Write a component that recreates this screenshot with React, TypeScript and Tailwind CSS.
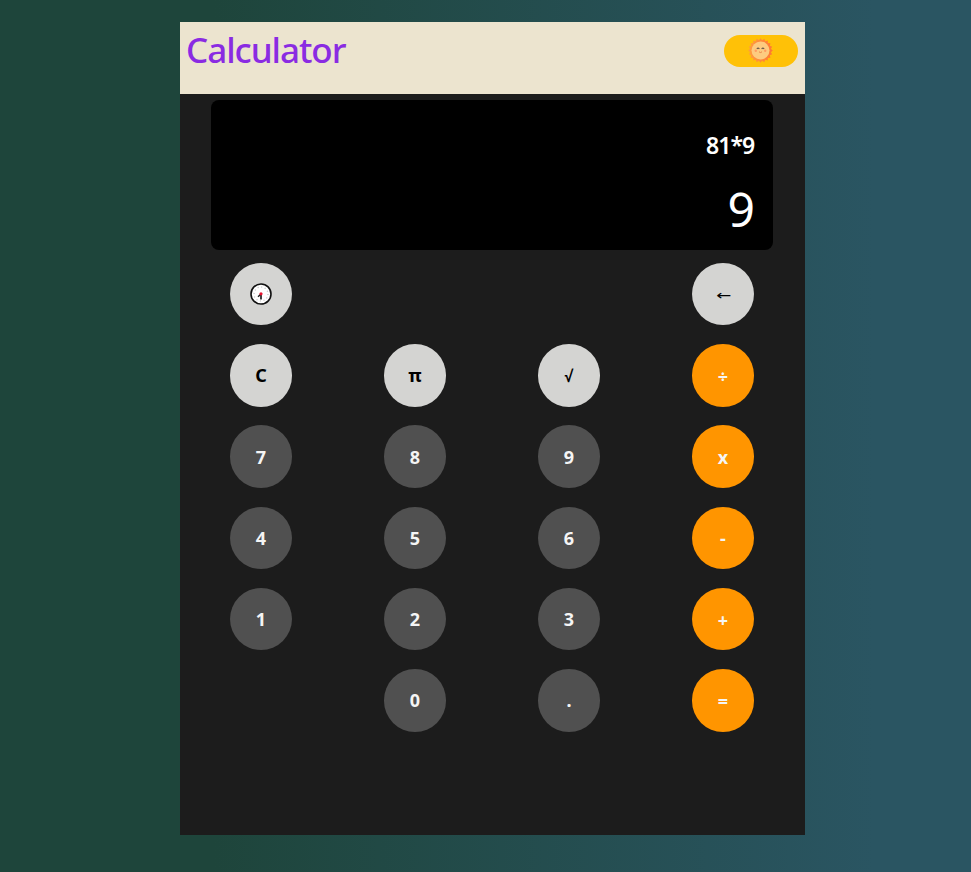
type Key = { label: string; kind: 'light' | 'dark' | 'orange' } | null;

const L = (label: string): Key => ({ label, kind: 'light' });
const D = (label: string): Key => ({ label, kind: 'dark' });
const O = (label: string): Key => ({ label, kind: 'orange' });

const keys: Key[] = [
  L('clock'), null, null, L('←'),
  L('C'), L('π'), L('√'), O('÷'),
  D('7'), D('8'), D('9'), O('x'),
  D('4'), D('5'), D('6'), O('-'),
  D('1'), D('2'), D('3'), O('+'),
  null, D('0'), D('.'), O('='),
];

const tones = {
  light: 'bg-[#d4d4d2] text-black',
  dark: 'bg-[#505050] text-[#f5f5f5]',
  orange: 'bg-[#ff9500] text-[#f5f5f5]',
};

function Clock() {
  return (
    <svg className="mb-[2px]" width="22" height="22" viewBox="0 0 22 22" aria-hidden="true">
      <circle cx="11" cy="11" r="10" fill="#fff" stroke="#111" strokeWidth="1.6" />
      <circle cx="11" cy="11" r="7" fill="none" stroke="#bbb" strokeWidth="1.2" strokeDasharray="1 2.665" />
      <path d="M11 11v5.5" stroke="#000" strokeWidth="1.5" />
      <path d="M11 11l-3 2.8" stroke="#222" strokeWidth="1.5" />
      <circle cx="11" cy="10.8" r="1.6" fill="#e8112d" />
    </svg>
  );
}

function Sun() {
  const points = Array.from({ length: 40 }, (_, i) => {
    const r = i % 2 ? 10.5 : 12.3;
    const a = (i * Math.PI) / 20;
    return `${12.5 + r * Math.cos(a)},${12.5 + r * Math.sin(a)}`;
  }).join(' ');
  return (
    <svg width="25" height="25" viewBox="0 0 25 25" aria-hidden="true">
      <defs>
        <linearGradient id="rays" x1="0" x2="1">
          <stop offset="0" stopColor="#ff9f3d" />
          <stop offset="1" stopColor="#ff7733" />
        </linearGradient>
      </defs>
      <polygon points={points} fill="url(#rays)" />
      <circle cx="12.5" cy="12.5" r="9" fill="#fdcb80" />
      <path d="M8.8 10.8q1.3-1.3 2.6 0M13.6 10.8q1.3-1.3 2.6 0" fill="none" stroke="#6b5a4a" strokeWidth="1.1" />
      <path d="M11 13.8q1.5 1.5 3 0" fill="none" stroke="#ec8448" strokeWidth="1" />
      <circle cx="7.8" cy="12.8" r="1.2" fill="#ff9b62" />
      <circle cx="17.2" cy="12.8" r="1.2" fill="#ff9b62" />
    </svg>
  );
}

function KeyFace({ label, lowered }: { label: string; lowered: boolean }) {
  if (label === 'clock') return <Clock />;
  if (label === '←') {
    return <span className="ml-px font-['DejaVu_Sans'] scale-y-75 text-[18px] leading-none font-normal">{label}</span>;
  }
  if (label === '√') return <span className="mr-px scale-x-90 text-[16px]">{label}</span>;
  return <span className={lowered ? 'pt-[2px]' : ''}>{label}</span>;
}

export default function App() {
  return (
    <div className="flex h-[872px] items-start justify-center bg-[linear-gradient(90deg,#1e453b_0%,#1e453b_22%,#2a5562_90%,#2a5562_100%)] pt-[22px] pl-[14px] font-['Noto_Sans','Open_Sans',sans-serif]">
      <main className="flex h-[813px] w-[625px] flex-col bg-[#1c1c1c]">
        <header className="flex h-[72px] items-start justify-between bg-[#ece4cf] pr-[7px] pl-[6px]">
          <h1 className="mt-[6px] text-[35px] leading-[44px] font-medium tracking-[-1.05px] text-[#8a2be2]">Calculator</h1>
          <button className="mt-[13px] flex h-8 w-[74px] items-center justify-center rounded-full bg-[#ffc107] pr-[2px] pb-[2px]">
            <Sun />
          </button>
        </header>
        <section className="mt-[6px] ml-[31px] flex h-[150px] w-[562px] flex-col items-end rounded-lg bg-black pr-[19px] text-white">
          <div className="mt-[27px] origin-right scale-x-[0.96] text-[24px] leading-[36px] font-semibold tracking-[-1px]">81*9</div>
          <div className="mt-[16px] -mr-px text-[48px] leading-[60px]">9</div>
        </section>
        <section className="mt-[3.6px] ml-[4px] grid w-[616px] auto-rows-[81.25px] grid-cols-4 place-items-center">
          {keys.map((key, i) =>
            key ? (
              <button key={i} className={`flex h-[62.5px] w-[62.5px] items-center justify-center rounded-full pt-px text-[18px] font-bold ${tones[key.kind]}`}>
                <KeyFace label={key.label} lowered={'÷+='.includes(key.label)} />
              </button>
            ) : (
              <div key={i} />
            ),
          )}
        </section>
      </main>
    </div>
  );
}
